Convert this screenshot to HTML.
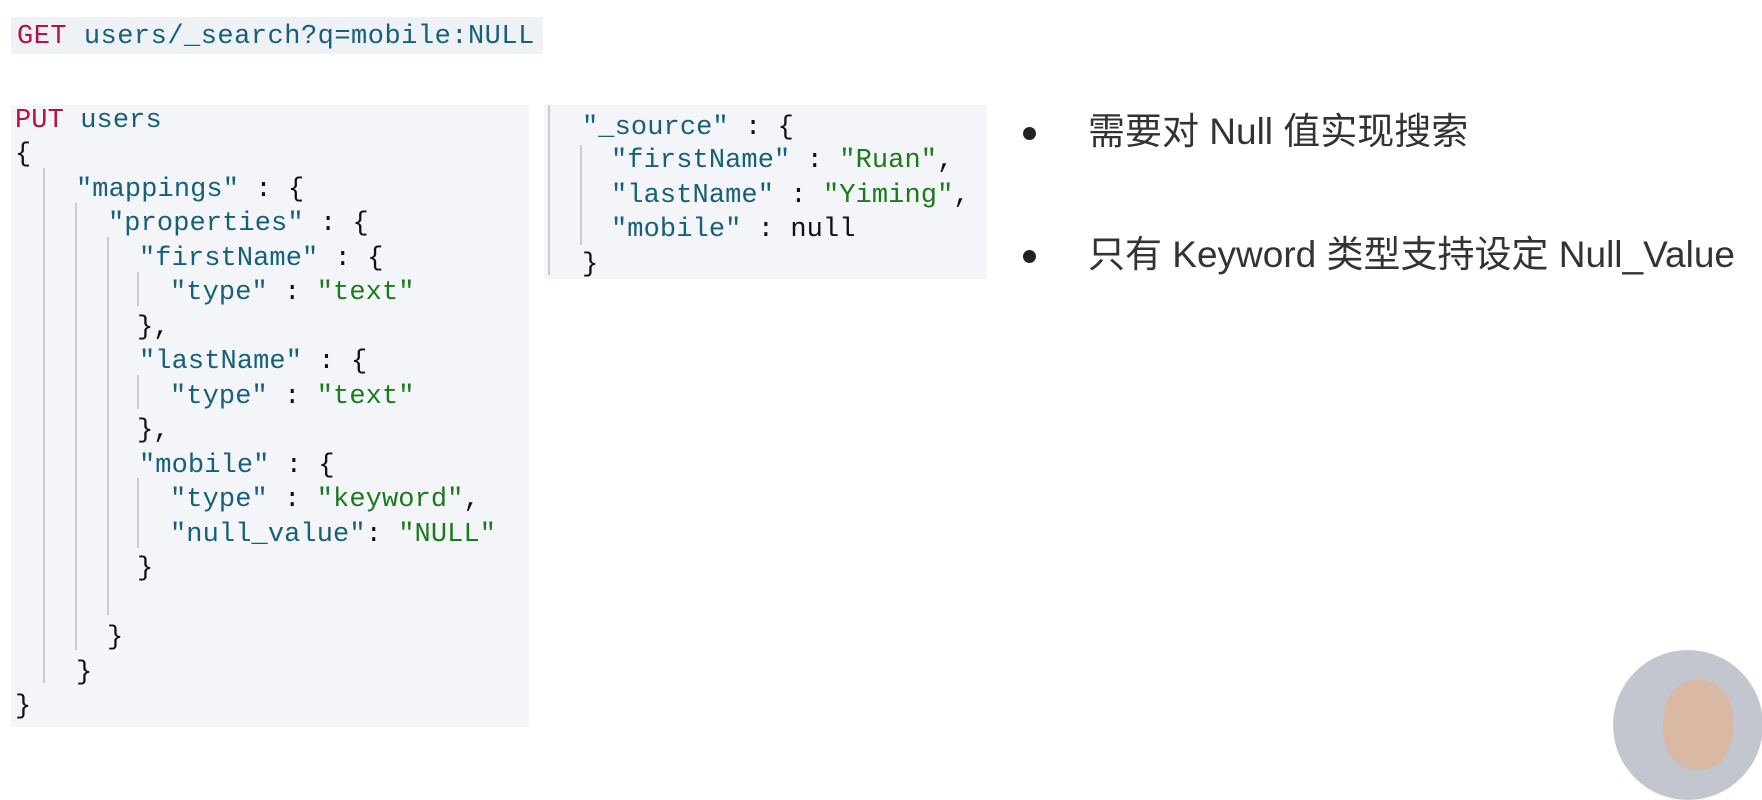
<!DOCTYPE html>
<html><head><meta charset="utf-8"><style>
body{margin:0;width:1762px;height:734px;background:#fff;position:relative;overflow:hidden;font-family:"Liberation Mono",monospace}
.p{position:absolute;background:#f4f5f9}
.l{position:absolute;font-size:27px;letter-spacing:0.1px;line-height:34px;white-space:pre;color:#111;margin-top:3px}
.r{color:#b0124a}.k{color:#17607a}.s{color:#1c7a1c}
.g{position:absolute;width:2px;background:#c9ccd3}
.t{position:absolute;font-family:"Liberation Sans","Noto Sans CJK SC",sans-serif;font-size:37px;color:#333;white-space:nowrap;line-height:40px}
.b{position:absolute;width:13px;height:13px;border-radius:50%;background:#222}
</style></head><body>
<div class="p" style="left:11px;top:17px;width:532px;height:37px;background:#eef1f6"></div>
<div class="l" style="left:17px;top:17px;letter-spacing:0.5px"><span class="r">GET</span> <span class="k">users/_search?q=mobile:NULL</span></div>

<div class="p" style="left:11px;top:105px;width:518px;height:622px"></div>
<div class="g" style="left:43px;top:168px;height:515px"></div>
<div class="g" style="left:75px;top:203px;height:447px"></div>
<div class="g" style="left:107px;top:237px;height:378px"></div>
<div class="g" style="left:137px;top:272px;height:34px"></div>
<div class="g" style="left:137px;top:375px;height:34px"></div>
<div class="g" style="left:137px;top:478px;height:70px"></div>

<div class="l" style="left:15px;top:101px"><span class="r">PUT</span> <span class="k">users</span></div>
<div class="l" style="left:15px;top:135px">{</div>
<div class="l" style="left:76px;top:170px"><span class="k">"mappings"</span> : {</div>
<div class="l" style="left:108px;top:204px"><span class="k">"properties"</span> : {</div>
<div class="l" style="left:139px;top:239px"><span class="k">"firstName"</span> : {</div>
<div class="l" style="left:170px;top:273px"><span class="k">"type"</span> : <span class="s">"text"</span></div>
<div class="l" style="left:137px;top:308px">},</div>
<div class="l" style="left:139px;top:342px"><span class="k">"lastName"</span> : {</div>
<div class="l" style="left:170px;top:377px"><span class="k">"type"</span> : <span class="s">"text"</span></div>
<div class="l" style="left:137px;top:411px">},</div>
<div class="l" style="left:139px;top:446px"><span class="k">"mobile"</span> : {</div>
<div class="l" style="left:170px;top:480px"><span class="k">"type"</span> : <span class="s">"keyword"</span>,</div>
<div class="l" style="left:170px;top:515px"><span class="k">"null_value"</span>: <span class="s">"NULL"</span></div>
<div class="l" style="left:137px;top:549px">}</div>
<div class="l" style="left:107px;top:618px">}</div>
<div class="l" style="left:76px;top:653px">}</div>
<div class="l" style="left:15px;top:687px">}</div>

<div class="p" style="left:544px;top:105px;width:443px;height:174px"></div>
<div class="g" style="left:548px;top:105px;height:170px"></div>
<div class="g" style="left:580px;top:145px;height:100px"></div>
<div class="l" style="left:582px;top:108px"><span class="k">"_source"</span> : {</div>
<div class="l" style="left:611px;top:141px"><span class="k">"firstName"</span> : <span class="s">"Ruan"</span>,</div>
<div class="l" style="left:611px;top:176px"><span class="k">"lastName"</span> : <span class="s">"Yiming"</span>,</div>
<div class="l" style="left:611px;top:210px"><span class="k">"mobile"</span> : null</div>
<div class="l" style="left:582px;top:245px">}</div>

<div class="b" style="left:1023px;top:127px"></div>
<div class="t" style="left:1088px;top:112px">需要对 Null 值实现搜索</div>
<div class="b" style="left:1023px;top:250px"></div>
<div class="t" style="left:1088px;top:235px">只有 Keyword 类型支持设定 Null_Value</div>

<div style="position:absolute;left:1613px;top:650px;width:150px;height:150px;border-radius:50%;background:#c3c5cf;overflow:hidden">
<div style="position:absolute;left:50px;top:30px;width:70px;height:90px;border-radius:45%;background:#d9b9a4"></div>
</div>
</body></html>
